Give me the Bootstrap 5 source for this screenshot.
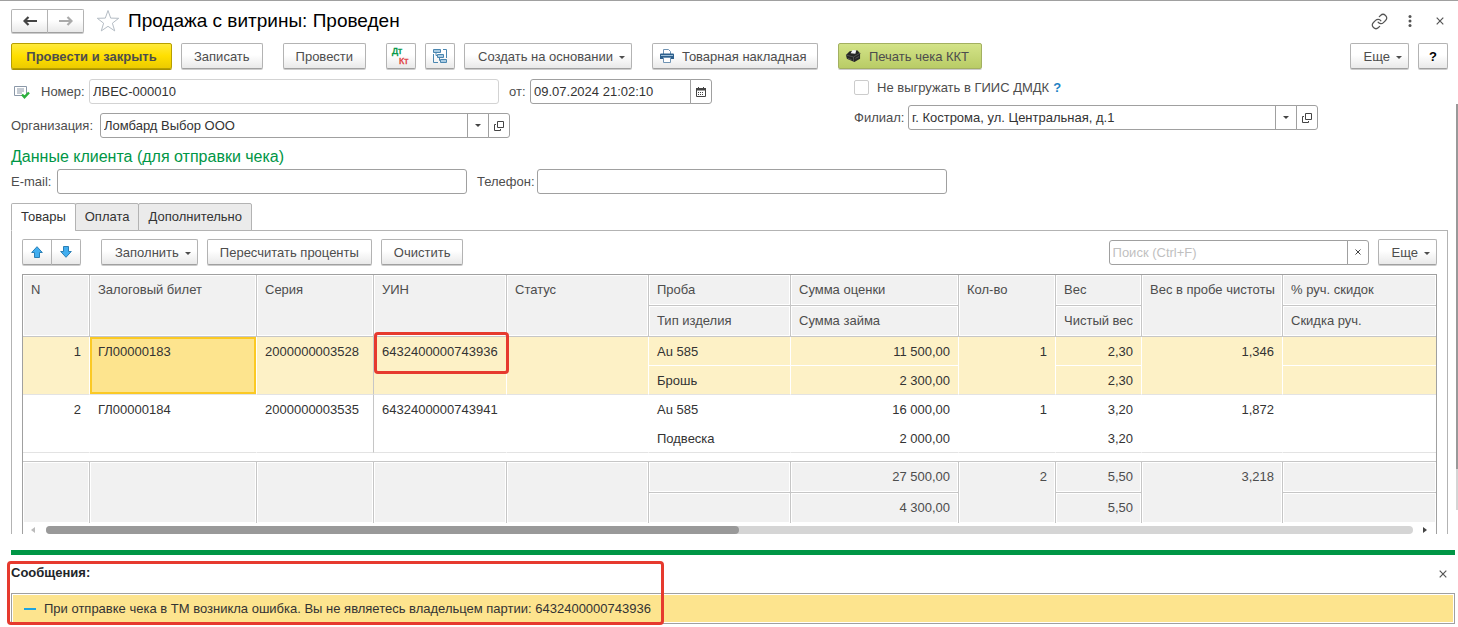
<!DOCTYPE html>
<html lang="ru">
<head>
<meta charset="utf-8">
<meta name="viewport" content="width=device-width, initial-scale=1">
<title>Продажа с витрины: Проведен</title>
<link href="https://cdn.jsdelivr.net/npm/bootstrap@5.3.0/dist/css/bootstrap.min.css" rel="stylesheet">
<style>
  body {
    --edge: #a0a0a0;
    --grid: #c6c6c6;
    font-family: "Liberation Sans", Arial, sans-serif;
    font-size: 13px;
    line-height: 17px;
    color: #4d4d4d;
    background: #fff;
  }
  svg { display: block; flex: none; }

  /* Form window */
  .form-window { border-top: 1px solid #a0a0a0; padding: 8px 10px 0 11px; }
  .title-text { font-size: 19px; line-height: 24px; color: #000; }
  .section-title { font-size: 16px; line-height: 20px; color: #009646; margin: 9px 0 2px; }
  .command-bar { margin: 10px 0; }
  .gap-near { gap: 9px; }
  .gap-far { gap: 20px; }
  .row-gap { gap: 9px; }

  /* Buttons */
  .btn-form {
    --bs-btn-font-size: 13px;
    --bs-btn-line-height: 17px;
    --bs-btn-padding-y: 0;
    --bs-btn-padding-x: 12px;
    --bs-btn-border-radius: 2px;
    --bs-btn-color: #4d4d4d;
    --bs-btn-border-color: #b3b3b3;
    --bs-btn-hover-color: #333;
    --bs-btn-hover-border-color: #999;
    height: 26px;
    background: linear-gradient(#fff 45%, #e9e9e9);
    border-bottom-color: #a0a0a0;
    box-shadow: 0 1px 0 #ccc;
    display: inline-flex;
    align-items: center;
    justify-content: center;
    white-space: nowrap;
  }
  .btn-nav { height: 24px; width: 37px; padding: 0; }
  .btn-ico { width: 30px; padding: 0; }
  .btn-drop { padding: 0 6px 0 13px; }
  .btn-drop.dropdown-toggle::after {
    border-top: 3px solid; border-left: 3px solid transparent; border-right: 3px solid transparent;
    margin: 2px 0 0 6px;
  }
  .btn-main {
    width: 161px; font-weight: bold;
    background: linear-gradient(#ffea3c, #ffdf00 50%, #eccb00);
    border-color: #b79f00; box-shadow: 0 1px 0 #a89200;
  }
  .btn-print { width: 166px; padding: 0 7px; justify-content: flex-start; }
  .btn-receipt { width: 144px; padding: 0 6px; justify-content: flex-start; background: linear-gradient(#d3e388, #b9cc66); border-color: #a3b061; }
  .btn-bare { --bs-btn-padding-x: 0; --bs-btn-padding-y: 0; --bs-btn-border-width: 0; min-width: 16px; height: 20px; display: flex; align-items: center; justify-content: center; }
  .window-tools { gap: 14px; }

  /* Fields */
  .field { height: 25px; min-height: 25px; padding: 0 3px; font-size: 13px; line-height: 17px; color: #333; border-color: var(--edge); border-radius: 3px; }
  .field-ro { border-color: #d3d3d3; }
  .field-btn { width: 22px; height: 25px; padding: 0; border: 1px solid var(--edge); border-radius: 3px; color: #333; background: #fff; display: flex; align-items: center; justify-content: center; }
  .field::placeholder { color: #bfbfbf; opacity: 1; }
  .w-field { flex: 0 1 410px; }
  .w-date { flex: 0 1 182px; }
  .w-search { flex: 0 1 260px; }
  .check-row { min-height: 17px; }
  .check-box { width: 15px; height: 15px; border: 1px solid #ccc; border-radius: 2px !important; }
  .col-left { flex: 0 1 843px; }
  .after-field { margin-left: 10px; }
  .state-ico { width: 30px; padding-left: 3px; }
  .lbl-s { width: 21px; } .lbl-m { width: 46px; } .lbl-n { width: 48px; } .lbl-f { width: 54px; } .lbl-l { width: 60px; } .lbl-xl { width: 89px; }
  .hint { color: #1c82c4; font-weight: bold; text-decoration: none; }

  /* Tabs */
  .form-tabs { --bs-nav-tabs-border-color: #b3b3b3; --bs-nav-tabs-border-radius: 2px; margin-top: 9px; }
  .form-tabs .nav-link { padding: 0 9px 2px; height: 28px; color: #333; background: #ebebeb; border-color: #b3b3b3; }
  .form-tabs .nav-item + .nav-item { margin-left: -1px; }
  .form-tabs .nav-link.active { background: #fff; border-color: #b3b3b3 #b3b3b3 #fff; color: #333; }
  .tab-body { border: 1px solid #b3b3b3; border-width: 0 1px; padding: 8px 10px 0; }

  /* Goods table */
  .goods-frame { border: 1px solid var(--edge); border-bottom: 0; margin-top: 9px; }
  .goods { width: 100%; table-layout: fixed; border-collapse: separate; border-spacing: 0; color: #333; }
  .goods th, .goods td { padding: 1px 8px 0; line-height: 27px; vertical-align: top; font-weight: normal; white-space: nowrap; border: 0 solid #fff; border-width: 0 1px 1px 0; position: relative; }
  .goods thead th, .goods tfoot td { padding-top: 0; background: #f1f1f1; color: #4d4d4d; line-height: 30px; border-color: var(--grid); box-shadow: inset 0 0 0 1px #fff; }
  .goods .edge-right { border-right-width: 0; }
  .goods .current td { background: #fdf1c6; }
  .goods .current td.picked { background: #fde48e; box-shadow: inset 0 0 0 2px #fbc924; }
  .goods tbody .row-end { border-bottom-color: #e3e3e3; }
  .goods tbody .frozen { border-right-color: var(--grid); }
  .goods .spacer td { height: 9px; border-color: var(--grid); border-right: 0; line-height: 8px; padding: 0; }
  .goods tfoot .foot-end { border-bottom-width: 0; }

  .h-scroll { height: 11px; padding: 3px 9px 0 8px; }
  .h-track { height: 8px; border-radius: 4px; background: #d5d5d5; margin: 0 10px 0 11px; }
  .h-thumb { height: 8px; border-radius: 4px; background: #999; }
  .v-scroll { position: absolute; right: 0; top: 103px; bottom: 24px; width: 2px; background: #d5d5d5; }
  .v-thumb { background: #999; }

  /* Messages */
  .messages { margin: 16px 3px 3px 11px; border-top: 5px solid #009646; }
  .messages-head { height: 38px; padding: 9px 4px 0 0; }
  .message-line { border: 1px solid var(--edge); background: #fde48e; box-shadow: inset 0 0 0 1px #fff; height: 31px; padding: 0 12px; color: #333; }
  .dash { width: 12px; height: 2px; background: #1ea4e0; }

  .marker { position: absolute; border: 3px solid #e63a2e; border-radius: 4px; pointer-events: none; z-index: 2; }
  .marker-cell { left: 0; top: -5px; width: 135px; height: 42px; }
  .marker-message { left: -4px; top: 6px; width: 657px; height: 64px; }
</style>
</head>
<body>
<main class="form-window position-relative">
  <header class="d-flex align-items-center">
    <div class="btn-group" role="group" aria-label="Навигация">
      <button type="button" class="btn btn-form btn-nav" aria-label="Назад">
        <svg width="14" height="10" viewBox="0 0 14 10"><path d="M5.500 1 1.500 5l4 4M1.500 5H14" fill="none" stroke="#444" stroke-width="2.200"/></svg>
      </button>
      <button type="button" class="btn btn-form btn-nav" aria-label="Вперед">
        <svg width="14" height="10" viewBox="0 0 14 10"><path d="M8.500 1l4 4-4 4M12.500 5H0" fill="none" stroke="#aaa" stroke-width="2.200"/></svg>
      </button>
    </div>
    <button type="button" class="btn btn-bare ms-2 me-2" aria-label="В избранное">
      <svg class="ms-1" width="24" height="24" viewBox="0 0 24 24"><path d="M12 1.500l2.700 7.600 8 .2-6.300 4.900 2.300 7.700L12 17.300l-6.700 4.600 2.300-7.700L1.300 9.300l8-.2z" fill="#fff" stroke="#b4bcc4"/></svg>
    </button>
    <h1 class="title-text fw-normal mb-0 flex-grow-1">Продажа с витрины: Проведен</h1>
    <div class="window-tools d-flex">
      <button type="button" class="btn btn-bare" aria-label="Ссылка">
        <svg width="17" height="17" viewBox="0 0 24 24" fill="none" stroke="#555" stroke-width="1.700" stroke-linecap="round"><path d="M10 13a5 5 0 0 0 7.540.540l3-3a5 5 0 0 0-7.070-7.070l-1.720 1.710M14 11a5 5 0 0 0-7.540-.540l-3 3a5 5 0 0 0 7.070 7.070l1.710-1.710"/></svg>
      </button>
      <button type="button" class="btn btn-bare" aria-label="Меню">
        <svg width="4" height="12" viewBox="0 0 4 12" fill="#555"><circle cx="2" cy="1.500" r="1.500"/><circle cx="2" cy="6" r="1.500"/><circle cx="2" cy="10.500" r="1.500"/></svg>
      </button>
      <button type="button" class="btn btn-bare" aria-label="Закрыть">
        <svg width="8" height="8" viewBox="0 0 8 8"><path d="M.7.700l6.600 6.600M7.300.7.700 7.300" stroke="#555" stroke-width="1.200"/></svg>
      </button>
    </div>
  </header>

  <div class="command-bar d-flex gap-far">
    <div class="d-flex gap-near">
      <button type="button" class="btn btn-form btn-main">Провести и закрыть</button>
      <button type="button" class="btn btn-form">Записать</button>
    </div>
    <button type="button" class="btn btn-form">Провести</button>
    <div class="d-flex gap-near">
      <button type="button" class="btn btn-form btn-ico" aria-label="Проводки">
        <svg width="20" height="20" viewBox="0 0 20 20" font-family="Liberation Sans, sans-serif" font-size="9" stroke-width=".4"><text x="1" y="8" fill="#009646" stroke="#009646">Дт</text><text x="8" y="18" fill="#e04040" stroke="#e04040">Кт</text></svg>
      </button>
      <button type="button" class="btn btn-form btn-ico" aria-label="Структура подчиненности">
        <svg width="16" height="16" viewBox="0 0 16 16" fill="#a9cbe2" stroke="#4a86b0"><path d="M11 1.500h3.500V10M1.500 6v8.500H6M4 4.500v3h2M7.500 9.500v3H9" fill="none"/><path d="M1.500 1.500h7v3h-7zM5.500 6.500h6v3h-6zM8.500 11.500h6v3h-6z"/></svg>
      </button>
      <button type="button" class="btn btn-form btn-drop dropdown-toggle">Создать на основании</button>
    </div>
    <button type="button" class="btn btn-form btn-print">
      <svg class="me-2" width="14" height="14" viewBox="0 0 14 14"><path d="M3.500 5V.5h5l2 2V5" fill="#fff" stroke="#6f93b3"/><path d="M1 4.500h12a1 1 0 0 1 1 1V10H0V5.500a1 1 0 0 1 1-1z" fill="#2d5f8c"/><path d="M1 6.500h12" stroke="#9fc0da"/><path d="M3.500 8.500h7v5h-7z" fill="#fff" stroke="#6f93b3"/></svg>
      Товарная накладная
    </button>
    <button type="button" class="btn btn-form btn-receipt">
      <svg class="me-2" width="16" height="14" viewBox="0 0 17 14"><path d="M1 6 5 2l8-1 3 3v6l-6 3.500L2 10z" fill="#262626"/><path d="M6 4 8 .5l4 .5-1 3.500z" fill="#f4f4f4"/><path d="M1 6l8 2 7-4M9 8v5" stroke="#666" fill="none" stroke-width=".7"/><path d="M3 9.500l4 1.500M11 9.500l4-2" stroke="#555"/></svg>
      Печать чека ККТ
    </button>
    <div class="d-flex gap-near ms-auto">
      <button type="button" class="btn btn-form btn-drop dropdown-toggle">Еще</button>
      <button type="button" class="btn btn-form btn-ico fw-bold text-black" aria-label="Справка">?</button>
    </div>
  </div>

  <div class="d-flex">
    <div class="col-left d-flex flex-column row-gap">
      <div class="d-flex align-items-center">
        <span class="state-ico"><svg width="16" height="14" viewBox="0 0 16 14"><path d="M.5 1.500h12v9H.5z" fill="#fff" stroke="#8b98a8"/><path d="M3 4h7M3 6h7M3 8h5" stroke="#8b98a8"/><path d="M8 9.500l2.500 2.700L15 7.500" fill="none" stroke="#2bb03c" stroke-width="2.400"/></svg></span>
        <label for="num" class="lbl-n">Номер:</label>
        <div class="w-field"><input id="num" class="form-control field field-ro" value="ЛВЕС-000010" readonly></div>
        <label for="date" class="lbl-s after-field text-nowrap">от:</label>
        <div class="input-group w-date flex-nowrap">
          <input id="date" class="form-control field" value="09.07.2024 21:02:10">
          <button type="button" class="field-btn" aria-label="Выбрать дату">
            <svg width="10" height="10" viewBox="0 0 10 10"><path d="M.5 1.500h9v8h-9z" fill="none" stroke="#444"/><path d="M0 1h10v2.500H0zM2 0h1v1H2zM7 0h1v1H7z" fill="#444"/><path d="M2 5.500h6M2 7.500h6" stroke="#444" stroke-dasharray="1 1"/></svg>
          </button>
        </div>
      </div>
      <div class="d-flex align-items-center">
        <label for="org" class="lbl-xl">Организация:</label>
        <div class="input-group w-field flex-nowrap">
          <input id="org" class="form-control field" value="Ломбард Выбор ООО">
          <button type="button" class="field-btn" aria-label="Выбрать организацию"><svg width="6" height="3" viewBox="0 0 6 3"><path d="M0 0h6L3 3z" fill="#444"/></svg></button>
          <button type="button" class="field-btn" aria-label="Открыть организацию"><svg width="10" height="10" viewBox="0 0 10 10" fill="none" stroke="#444"><path d="M3.500.5h6v6h-6zM2 3.500H.5v6h6V8"/></svg></button>
        </div>
      </div>
    </div>
    <div class="flex-grow-1 d-flex flex-column row-gap">
      <div class="form-check check-row d-flex align-items-center p-0 m-0">
        <input class="form-check-input check-box float-none m-0" type="checkbox" id="nogiis">
        <label class="form-check-label ms-1 ps-1" for="nogiis">Не выгружать в ГИИС ДМДК</label>
        <a href="#" class="hint ms-1">?</a>
      </div>
      <div class="d-flex align-items-center">
        <label for="branch" class="lbl-f">Филиал:</label>
        <div class="input-group w-field flex-nowrap">
          <input id="branch" class="form-control field" value="г. Кострома, ул. Центральная, д.1">
          <button type="button" class="field-btn" aria-label="Выбрать филиал"><svg width="6" height="3" viewBox="0 0 6 3"><path d="M0 0h6L3 3z" fill="#444"/></svg></button>
          <button type="button" class="field-btn" aria-label="Открыть филиал"><svg width="10" height="10" viewBox="0 0 10 10" fill="none" stroke="#444"><path d="M3.500.5h6v6h-6zM2 3.500H.5v6h6V8"/></svg></button>
        </div>
      </div>
    </div>
  </div>

  <h2 class="section-title fw-normal">Данные клиента (для отправки чека)</h2>
  <div class="d-flex align-items-center">
    <label for="mail" class="lbl-m">E-mail:</label>
    <div class="w-field"><input id="mail" type="email" class="form-control field"></div>
    <label for="phone" class="lbl-l after-field">Телефон:</label>
    <div class="w-field"><input id="phone" type="tel" class="form-control field"></div>
  </div>

  <ul class="nav nav-tabs form-tabs" role="tablist">
    <li class="nav-item"><button type="button" class="nav-link active" role="tab" aria-selected="true">Товары</button></li>
    <li class="nav-item"><button type="button" class="nav-link" role="tab" aria-selected="false">Оплата</button></li>
    <li class="nav-item"><button type="button" class="nav-link" role="tab" aria-selected="false">Дополнительно</button></li>
  </ul>

  <section class="tab-body" role="tabpanel">
    <div class="d-flex align-items-center gap-far">
      <div class="btn-group" role="group" aria-label="Порядок строк">
        <button type="button" class="btn btn-form btn-ico" aria-label="Вверх"><svg width="12" height="12" viewBox="0 0 12 12"><path d="M6 .7 11.300 6.500H8.500v5h-5v-5H.7z" fill="#41aef0" stroke="#2b7fb5"/></svg></button>
        <button type="button" class="btn btn-form btn-ico" aria-label="Вниз"><svg width="12" height="12" viewBox="0 0 12 12"><path d="M6 11.300.7 5.500h2.800v-5h5v5h2.800z" fill="#41aef0" stroke="#2b7fb5"/></svg></button>
      </div>
      <div class="d-flex gap-near">
        <button type="button" class="btn btn-form btn-drop dropdown-toggle">Заполнить</button>
        <button type="button" class="btn btn-form">Пересчитать проценты</button>
        <button type="button" class="btn btn-form">Очистить</button>
      </div>
      <div class="d-flex flex-grow-1 justify-content-end align-items-center gap-near">
        <div class="input-group w-search flex-nowrap">
          <input type="search" class="form-control field" placeholder="Поиск (Ctrl+F)" aria-label="Поиск">
          <button type="button" class="field-btn" aria-label="Очистить поиск"><svg width="6" height="6" viewBox="0 0 6 6"><path d="M.5.500l5 5M5.500.5l-5 5" stroke="#444"/></svg></button>
        </div>
        <button type="button" class="btn btn-form btn-drop dropdown-toggle">Еще</button>
      </div>
    </div>

    <div class="goods-frame">
      <table class="goods">
        <colgroup>
          <col style="width:67px"><col style="width:167px"><col style="width:117px"><col style="width:133px"><col style="width:142px"><col style="width:142px"><col style="width:168px"><col style="width:97px"><col style="width:86px"><col style="width:141px"><col>
        </colgroup>
        <thead>
          <tr><th rowspan="2">N</th><th rowspan="2">Залоговый билет</th><th rowspan="2">Серия</th><th rowspan="2">УИН</th><th rowspan="2">Статус</th><th>Проба</th><th>Сумма оценки</th><th rowspan="2">Кол-во</th><th>Вес</th><th rowspan="2">Вес в пробе чистоты</th><th class="edge-right">% руч. скидок</th></tr>
          <tr><th>Тип изделия</th><th>Сумма займа</th><th>Чистый вес</th><th class="edge-right">Скидка руч.</th></tr>
        </thead>
        <tbody>
          <tr class="current"><td rowspan="2" class="text-end row-end">1</td><td rowspan="2" class="picked row-end">ГЛ00000183</td><td rowspan="2" class="row-end frozen">2000000003528</td><td rowspan="2" class="row-end">6432400000743936<span class="marker marker-cell"></span></td><td rowspan="2" class="row-end"></td><td>Au 585</td><td class="text-end">11 500,00</td><td rowspan="2" class="text-end row-end">1</td><td class="text-end">2,30</td><td rowspan="2" class="text-end row-end">1,346</td><td class="edge-right"></td></tr>
          <tr class="current"><td class="row-end">Брошь</td><td class="text-end row-end">2 300,00</td><td class="text-end row-end">2,30</td><td class="row-end edge-right"></td></tr>
          <tr><td rowspan="2" class="text-end row-end">2</td><td rowspan="2" class="row-end">ГЛ00000184</td><td rowspan="2" class="row-end frozen">2000000003535</td><td rowspan="2" class="row-end">6432400000743941</td><td rowspan="2" class="row-end"></td><td>Au 585</td><td class="text-end">16 000,00</td><td rowspan="2" class="text-end row-end">1</td><td class="text-end">3,20</td><td rowspan="2" class="text-end row-end">1,872</td><td class="edge-right"></td></tr>
          <tr><td class="row-end">Подвеска</td><td class="text-end row-end">2 000,00</td><td class="text-end row-end">3,20</td><td class="row-end edge-right"></td></tr>
          <tr class="spacer"><td colspan="11"></td></tr>
        </tbody>
        <tfoot>
          <tr><td rowspan="2" class="foot-end"></td><td rowspan="2" class="foot-end"></td><td rowspan="2" class="foot-end"></td><td rowspan="2" class="foot-end"></td><td rowspan="2" class="foot-end"></td><td>&nbsp;</td><td class="text-end">27 500,00</td><td rowspan="2" class="text-end foot-end">2</td><td class="text-end">5,50</td><td rowspan="2" class="text-end foot-end">3,218</td><td class="edge-right"></td></tr>
          <tr><td class="foot-end">&nbsp;</td><td class="text-end foot-end">4 300,00</td><td class="text-end foot-end">5,50</td><td class="edge-right foot-end"></td></tr>
        </tfoot>
      </table>
      <div class="h-scroll d-flex align-items-center">
        <svg width="4" height="6" viewBox="0 0 4 6"><path d="M4 0v6L0 3z" fill="#bbb"/></svg>
        <div class="h-track flex-grow-1"><div class="h-thumb" style="width:50.7%"></div></div>
        <svg width="4" height="6" viewBox="0 0 4 6"><path d="M0 0v6l4-3z" fill="#444"/></svg>
      </div>
    </div>
  </section>
  <div class="v-scroll"><div class="v-thumb" style="height:90%"></div></div>
</main>

<section class="messages position-relative">
  <div class="messages-head d-flex justify-content-between">
    <strong class="text-dark">Сообщения:</strong>
    <button type="button" class="btn btn-bare" aria-label="Закрыть сообщения"><svg width="8" height="8" viewBox="0 0 8 8"><path d="M.7.700l6.600 6.600M7.300.7.700 7.300" stroke="#555" stroke-width="1.200"/></svg></button>
  </div>
  <div class="message-line d-flex align-items-center">
    <span class="dash me-2"></span>
    <span>При отправке чека в ТМ возникла ошибка. Вы не являетесь владельцем партии: 6432400000743936</span>
  </div>
  <span class="marker marker-message"></span>
</section>
<script src="https://cdn.jsdelivr.net/npm/bootstrap@5.3.0/dist/js/bootstrap.bundle.min.js"></script>
</body>
</html>
